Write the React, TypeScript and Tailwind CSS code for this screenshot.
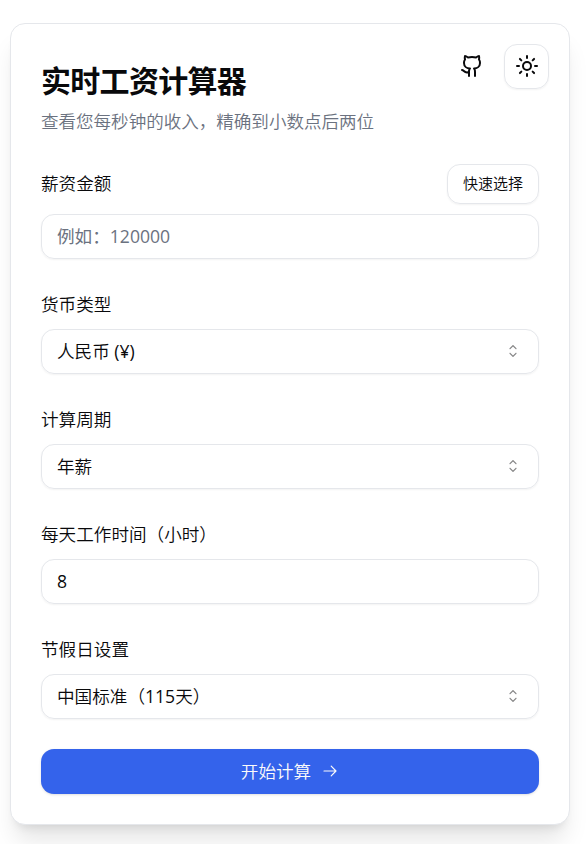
import type { ReactNode } from "react";
import { Github, Sun } from "lucide-react";

function Chevrons() {
  return (
    <svg width="20" height="20" viewBox="0 0 15 15" fill="none" className="opacity-50">
      <path
        d="M4.93179 5.43179C4.75605 5.60753 4.75605 5.89245 4.93179 6.06819C5.10753 6.24392 5.39245 6.24392 5.56819 6.06819L7.49999 4.13638L9.43179 6.06819C9.60753 6.24392 9.89245 6.24392 10.0682 6.06819C10.2439 5.89245 10.2439 5.60753 10.0682 5.43179L7.81819 3.18179C7.73379 3.0974 7.61933 3.04999 7.49999 3.04999C7.38064 3.04999 7.26618 3.0974 7.18179 3.18179L4.93179 5.43179ZM10.0682 9.56819C10.2439 9.39245 10.2439 9.10753 10.0682 8.93179C9.89245 8.75606 9.60753 8.75606 9.43179 8.93179L7.49999 10.8636L5.56819 8.93179C5.39245 8.75606 5.10753 8.75606 4.93179 8.93179C4.75605 9.10753 4.75605 9.39245 4.93179 9.56819L7.18179 11.8182C7.35753 11.9939 7.64245 11.9939 7.81819 11.8182L10.0682 9.56819Z"
        fill="currentColor"
        fillRule="evenodd"
        clipRule="evenodd"
      />
    </svg>
  );
}

function ArrowRight() {
  return (
    <svg width="18" height="18" viewBox="0 0 15 15" fill="none">
      <path
        d="M8.14645 3.14645C8.34171 2.95118 8.65829 2.95118 8.85355 3.14645L12.8536 7.14645C13.0488 7.34171 13.0488 7.65829 12.8536 7.85355L8.85355 11.8536C8.65829 12.0488 8.34171 12.0488 8.14645 11.8536C7.95118 11.6583 7.95118 11.3417 8.14645 11.1464L11.2929 8H2.5C2.22386 8 2 7.77614 2 7.5C2 7.22386 2.22386 7 2.5 7H11.2929L8.14645 3.85355C7.95118 3.65829 7.95118 3.34171 8.14645 3.14645Z"
        fill="currentColor"
        fillRule="evenodd"
        clipRule="evenodd"
      />
    </svg>
  );
}

function Field({ label, children }: { label: string; children: ReactNode }) {
  return (
    <div className="flex flex-col gap-2.5">
      <label className="h-[30px] leading-[30px]">{label}</label>
      {children}
    </div>
  );
}

function SelectBox({ children }: { children: ReactNode }) {
  return (
    <button className="flex h-[45px] w-full items-center justify-between rounded-[13px] border border-[#e5e7eb] px-[15px] pb-px shadow-xs">
      <span>{children}</span>
      <Chevrons />
    </button>
  );
}

export default function App() {
  return (
    <div className="h-[844px] overflow-hidden bg-white px-[10px] pt-[23px] font-['Open_Sans','Noto_Sans_CJK_SC',sans-serif] text-[17.6px] font-[350] text-[#09090b]">
      <div className="h-[802px] w-[560px] rounded-[15px] border border-[#e5e7eb] bg-white px-[30px] pt-5 shadow-xl">
        {/* Header */}
        <div className="flex h-[120px] justify-between">
          <div className="pt-[19px]">
            <h1 className="text-[30px] leading-[36px] font-bold tracking-[-0.7px]">
              实时工资计算器
            </h1>
            <p className="mt-[10px] text-[17.55px] leading-[25px] text-[#6b7280]">
              查看您每秒钟的收入，精确到小数点后两位
            </p>
          </div>
          <div className="-mr-2.5 flex gap-2.5">
            <button className="flex size-[45px] items-center justify-center pb-px">
              <Github size={24} />
            </button>
            <button className="flex size-[45px] items-center justify-center rounded-[13px] border border-[#e5e7eb] pb-px shadow-xs">
              <Sun size={24} />
            </button>
          </div>
        </div>

        {/* Form */}
        <div className="flex flex-col gap-[30px]">
          <div className="flex flex-col gap-2.5">
            <div className="flex h-10 items-center justify-between">
              <label className="pb-0.5">薪资金额</label>
              <button className="h-10 w-[92px] rounded-[13px] border border-[#e5e7eb] pb-0.5 text-[15px] shadow-xs">
                快速选择
              </button>
            </div>
            <input
              placeholder="例如：120000"
              className="h-[45px] w-full rounded-[13px] border border-[#e5e7eb] px-[15px] pb-0.5 font-normal shadow-xs placeholder:text-[#6b7280]"
            />
          </div>

          <Field label="货币类型">
            <SelectBox>
              人民币 <span className="font-normal">(¥)</span>
            </SelectBox>
          </Field>
          <Field label="计算周期">
            <SelectBox>年薪</SelectBox>
          </Field>
          <Field label="每天工作时间（小时）">
            <input
              defaultValue="8"
              className="h-[45px] w-full rounded-[13px] border border-[#e5e7eb] px-[15px] pb-0.5 font-normal shadow-xs"
            />
          </Field>
          <Field label="节假日设置">
            <SelectBox>
              中国标准（<span className="font-normal">115</span>天）
            </SelectBox>
          </Field>

          <button className="flex h-[45px] items-center justify-center gap-2.5 rounded-[13px] bg-[#3463eb] pb-px text-[#fafafa] shadow-sm">
            开始计算
            <ArrowRight />
          </button>
        </div>
      </div>
    </div>
  );
}
